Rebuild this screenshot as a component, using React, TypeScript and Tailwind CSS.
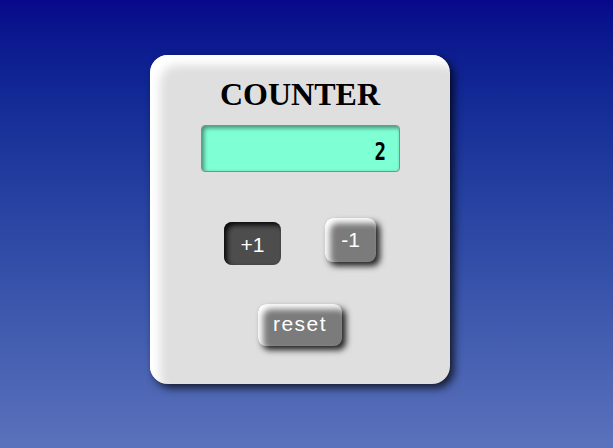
import { useState } from 'react'

export default function App() {
  const [count, setCount] = useState(2)

  return (
    <div className="min-h-[448px] w-full bg-gradient-to-b from-[#08088a] to-[#5b72bb] pt-[55px] pl-[150px]">
      <div className="w-[300px] h-[329px] rounded-[18px] bg-[#dfdfdf] shadow-[inset_10px_10px_10px_#fff,4px_4px_8px_rgba(0,0,0,0.75)] flex flex-col items-center pt-[21px]">
        <h1 className="font-['Liberation_Serif',serif] font-bold text-[32px] leading-[36px] text-black">COUNTER</h1>

        {/* display */}
        <div className="mt-[13px] w-[199px] h-[47px] rounded-[4px] border border-[#8a8a8a] bg-[#7fffd4] shadow-[inset_2px_2px_4px_rgba(0,0,0,0.45)] flex items-center justify-end pr-[11px] pt-[6px]">
          <span className="font-['DejaVu_Sans_Mono',monospace] font-bold text-[24px] leading-none text-black scale-x-[0.8]">{count}</span>
        </div>

        {/* +1 / -1 */}
        <div className="mt-[46px] flex items-start gap-[44px]">
          <button
            onClick={() => setCount(count + 1)}
            className="mt-[4px] w-[57px] h-[43px] rounded-[8px] bg-[#4d4d4d] shadow-[inset_3px_3px_5px_rgba(0,0,0,0.9)] text-white font-['Liberation_Sans',sans-serif] text-[21px] leading-none pt-[1px]"
          >
            +1
          </button>
          <button
            onClick={() => setCount(count - 1)}
            className="w-[51px] h-[44px] rounded-[8px] bg-[#7b7b7b] shadow-[inset_5px_5px_6px_#fff,4px_4px_6px_rgba(0,0,0,0.85)] text-white font-['Liberation_Sans',sans-serif] text-[21px] leading-none pb-[2px]"
          >
            -1
          </button>
        </div>

        <button
          onClick={() => setCount(0)}
          className="mt-[39px] w-[84px] h-[42px] rounded-[8px] bg-[#7b7b7b] shadow-[inset_5px_5px_6px_#fff,4px_4px_6px_rgba(0,0,0,0.85)] text-white font-['Liberation_Sans',sans-serif] text-[21px] tracking-[1.5px] leading-none pb-[3px]"
        >
          reset
        </button>
      </div>
    </div>
  )
}
